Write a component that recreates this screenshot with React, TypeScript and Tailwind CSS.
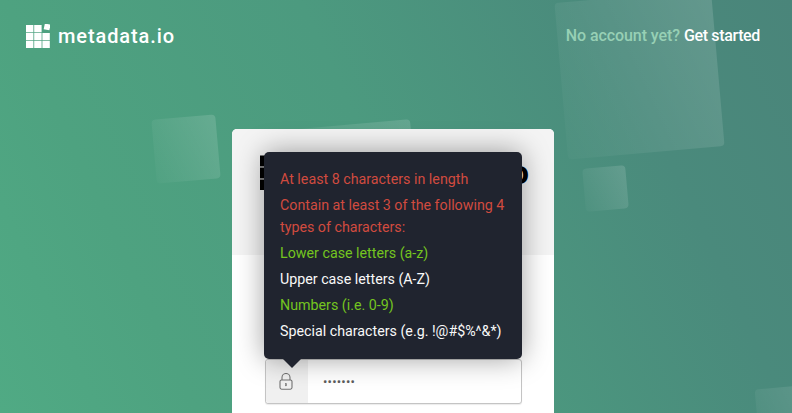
import React from "react";

const rules = [
  { text: "At least 8 characters in length", color: "text-[#d14b3f]" },
  { text: "Contain at least 3 of the following 4 types of characters:", color: "text-[#d14b3f]" },
  { text: "Lower case letters (a-z)", color: "text-[#74c51f]" },
  { text: "Upper case letters (A-Z)", color: "text-[#f8f8f8]" },
  { text: "Numbers (i.e. 0-9)", color: "text-[#74c51f]" },
  { text: "Special characters (e.g. !@#$%^&*)", color: "text-[#f8f8f8]" },
];

function Logo({ className }: { className: string }) {
  return (
    <svg viewBox="0 0 24 24" className={className} fill="currentColor">
      <rect x="0" y="1" width="7.4" height="7.3" />
      <rect x="8.2" y="1" width="7.4" height="7.3" />
      <rect x="18.2" y="0" width="5.8" height="5.8" transform="rotate(12 21 3)" />
      <rect x="0" y="9" width="7.4" height="7.3" />
      <rect x="8.2" y="9" width="7.4" height="7.3" />
      <rect x="16.4" y="9" width="7.4" height="7.3" />
      <rect x="0" y="17" width="7.4" height="7" />
      <rect x="8.2" y="17" width="7.4" height="7" />
      <rect x="16.4" y="17" width="7.4" height="7" />
    </svg>
  );
}

function LockIcon() {
  return (
    <svg viewBox="0 0 14 17" className="h-[17px] w-[14px] text-[#737373]" fill="none" stroke="currentColor">
      <path d="M3 7V4.5a4 4 0 0 1 8 0V7" strokeWidth="1.1" />
      <rect x="1" y="7" width="12" height="9.2" rx="1.6" strokeWidth="1.1" />
      <rect x="6.5" y="10.5" width="1" height="2.4" fill="currentColor" strokeWidth="0.4" />
    </svg>
  );
}

function Square({ className }: { className: string }) {
  return (
    <div
      className={`absolute rounded-[4px] bg-[linear-gradient(70deg,rgba(255,255,255,0.02),rgba(255,255,255,0.14))] ${className}`}
    />
  );
}

export default function App() {
  return (
    <div className="relative h-[413px] w-[792px] overflow-hidden bg-[linear-gradient(65deg,#50aa84_0%,#4ea280_20%,#4c9a7f_50%,#4a8a7c_80%,#4a857a_100%)] font-['Roboto',sans-serif]">
      <Square className="left-[154px] top-[117px] h-[64px] w-[64px] -rotate-[5deg]" />
      <Square className="left-[561px] top-[-4px] h-[157px] w-[157px] -rotate-[5deg]" />
      <Square className="left-[584px] top-[167px] h-[43px] w-[43px] -rotate-[5deg]" />
      <Square className="left-[300px] top-[124px] h-[180px] w-[118px] -rotate-[5deg]" />
      <Square className="left-[758px] top-[386px] h-[80px] w-[80px] -rotate-[5deg]" />

      <div className="relative w-[786px]">
        <header className="flex h-[129px] items-start justify-between px-[26px] pt-[23px]">
          <div className="flex items-center gap-[8px] text-white">
            <Logo className="h-[24px] w-[24px]" />
            <span className="text-[20px] font-medium leading-[26px] tracking-[0.9px]">metadata.io</span>
          </div>
          <div className="pt-[3px] text-[16px] font-medium leading-[20px]">
            <span className="tracking-[-0.07px] text-[#97d0b5]">No account yet? </span>
            <span className="tracking-[-0.35px] text-white">Get started</span>
          </div>
        </header>

        <main className="mx-auto h-[284px] w-[322px] rounded-t-[5px] bg-white">
          <div className="flex h-[126px] items-start justify-between rounded-t-[5px] bg-[#f4f4f4] pl-[28px] pr-[23px] pt-[23px] text-black">
            <Logo className="mt-[2px] h-[36px] w-[36px]" />
            <span className="text-[34px] font-bold leading-[40px] tracking-[2px]">metadata.io</span>
          </div>
          <div className="px-[33px] pt-[104px]">
            <div className="relative flex h-[45px] w-[257px] rounded-[3px] border border-[#c4c4c4] bg-white shadow-[0_1px_1px_rgba(0,0,0,0.08)]">
              <div className="flex w-[42px] items-center justify-center rounded-l-[3px] bg-[#f0f0f0] pr-[2px]">
                <LockIcon />
              </div>
              <div className="flex items-center pl-[15px] text-[13px] tracking-[0.2px] text-[#5c5c5c]">•••••••</div>

              <div className="absolute bottom-full left-[-2px] mb-[1px] h-[207px] w-[258px] rounded-[5px] bg-[#20242f] px-[16px] pt-[16px] shadow-[0_0_28px_rgba(0,0,0,0.38)]">
                <div className="flex flex-col gap-[4px]">
                  {rules.map((rule) => (
                    <p key={rule.text} className={`text-[14.25px] leading-[22px] ${rule.color}`}>
                      {rule.text}
                    </p>
                  ))}
                </div>
                <div className="absolute left-[19px] top-full h-0 w-0 border-x-[9px] border-t-[9px] border-x-transparent border-t-[#20242f]" />
              </div>
            </div>
          </div>
        </main>
      </div>
    </div>
  );
}
